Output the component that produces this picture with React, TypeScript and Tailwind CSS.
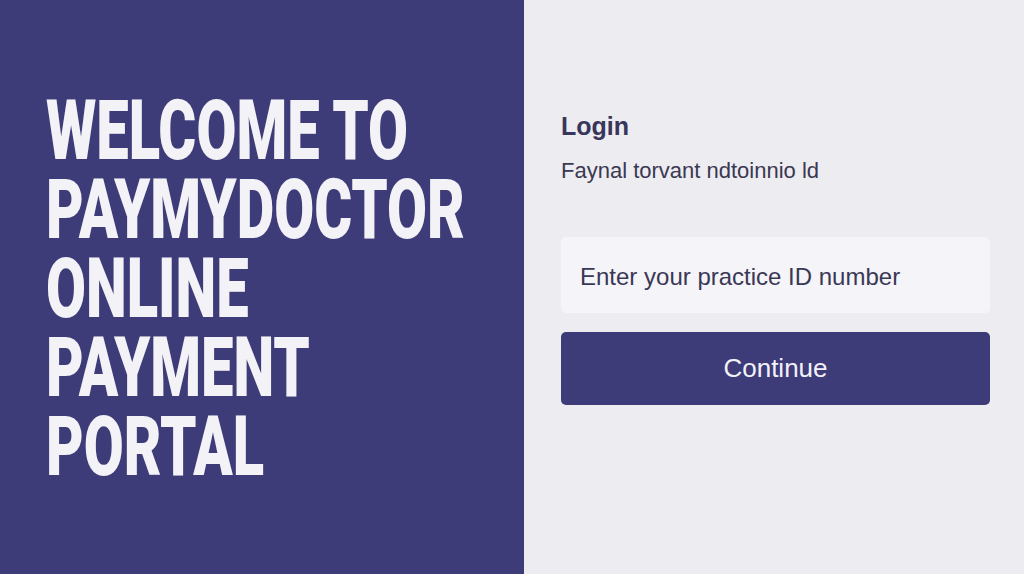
import React from "react";

const lines = ["WELCOME TO", "PAYMYDOCTOR", "ONLINE", "PAYMENT", "PORTAL"];

export default function App() {
  return (
    <div className="flex h-[574px] w-[1024px] overflow-hidden font-['Liberation_Sans',Arial,sans-serif]">
      <div className="w-[524px] shrink-0 bg-[#3d3b78] pl-[46px] pt-[91px]">
        <h1 className="flex flex-col font-['Roboto',sans-serif] text-[83px] font-black leading-[79px] text-[#f3f2f7]">
          {lines.map((l) => (
            <span key={l} className="block h-[79px] origin-left scale-x-[0.698] whitespace-nowrap">
              {l}
            </span>
          ))}
        </h1>
      </div>
      <div className="flex flex-1 flex-col bg-[#edecf0] pl-[37px] pr-[34px] pt-[111px]">
        <div className="text-[25px] font-bold leading-[30px] text-[#38365a]">Login</div>
        <div className="mt-[17px] text-[22px] leading-[26px] text-[#3a3852]">
          Faynal torvant ndtoinnio ld
        </div>
        <div className="mt-[53px] flex h-[76px] items-center rounded-[5px] bg-[#f5f4f8] px-[19px] pt-[4px] text-[24px] text-[#3a3856]">
          Enter your practice ID number
        </div>
        <button className="mt-[19px] flex h-[73px] items-center justify-center rounded-[5px] bg-[#3e3b79] text-[26px] text-[#f2f1f7]">
          Continue
        </button>
      </div>
    </div>
  );
}
